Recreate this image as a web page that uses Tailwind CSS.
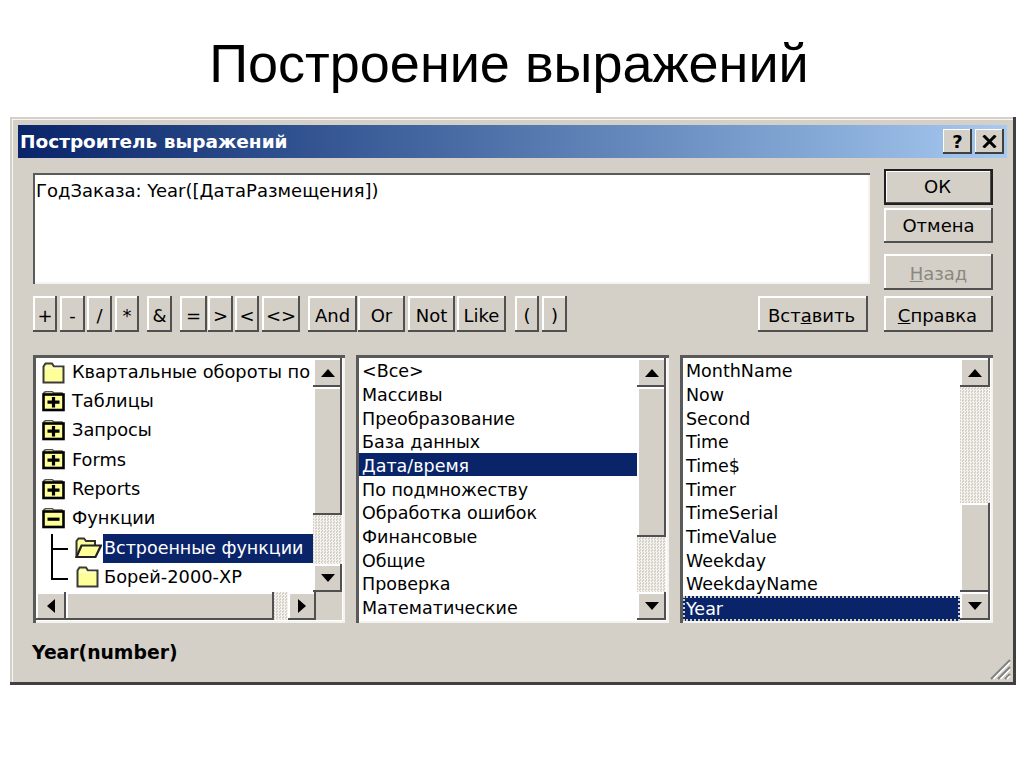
<!DOCTYPE html>
<html lang="ru">
<head>
<meta charset="UTF-8">
<title>Построение выражений</title>
<script src="https://cdn.jsdelivr.net/npm/@tailwindcss/browser@4"></script>
</head>
<body class="bg-white w-[1024px] h-[767px] overflow-hidden font-['DejaVu_Sans',sans-serif] text-[18px] text-black">
<svg class="hidden">
  <symbol id="folder" viewBox="0 0 23 22">
    <path d="M1.5 20.5V4.5L3.5 1.5H10L12 4.5H21.5V20.5Z" fill="#ffff99" stroke="#3a3a3a" stroke-width="2"/>
    <path d="M3 6H20" stroke="#fff" stroke-width="1"/>
  </symbol>
  <symbol id="folder-plus" viewBox="0 0 23 22">
    <path d="M2 5V1.5L4 0.5H10L12 2H20V5" fill="#e8e8a0" stroke="#555" stroke-width="1.5"/>
    <rect x="1.5" y="3.5" width="20" height="15.5" fill="#ffff99" stroke="#000" stroke-width="2.6"/>
    <path d="M5.5 11.2H17.5M11.5 6V16.5" stroke="#000" stroke-width="3.2"/>
  </symbol>
  <symbol id="folder-minus" viewBox="0 0 23 22">
    <path d="M2 5V1.5L4 0.5H10L12 2H20V5" fill="#e8e8a0" stroke="#555" stroke-width="1.5"/>
    <rect x="1.5" y="3.5" width="20" height="15.5" fill="#ffff99" stroke="#000" stroke-width="2.6"/>
    <path d="M5.5 11.2H17.5" stroke="#000" stroke-width="3.2"/>
  </symbol>
  <symbol id="folder-open" viewBox="0 0 27 22">
    <path d="M1.5 20V4L3.5 1.5H9L11 4H20V8" fill="#ffff99" stroke="#333" stroke-width="2"/>
    <path d="M1.5 20L6.5 8.5H26L20.5 20Z" fill="#ffff99" stroke="#222" stroke-width="2.2"/>
  </symbol>
  <symbol id="arrow-up" viewBox="0 0 14 8"><path d="M7 0L14 8H0Z" fill="#000"/></symbol>
  <symbol id="arrow-down" viewBox="0 0 14 8"><path d="M7 8L14 0H0Z" fill="#000"/></symbol>
  <symbol id="arrow-left" viewBox="0 0 8 14"><path d="M0 7L8 0V14Z" fill="#000"/></symbol>
  <symbol id="arrow-right" viewBox="0 0 8 14"><path d="M8 7L0 0V14Z" fill="#000"/></symbol>
</svg>

<!-- Slide heading -->
<h1 class="h-[117px] flex items-center justify-center pt-[9px] pr-[6px] font-['Liberation_Sans',sans-serif] text-[54px] text-black">Построение выражений</h1>

<!-- Dialog -->
<div class="relative ml-[10px] w-[1006px] h-[568px] bg-[#d4d0c8] pt-[8px] pl-[8px] pr-[9px] shadow-[inset_-3px_-3px_0_#404040,inset_2px_2px_0_#d4d0c8,inset_3px_3px_0_#f6f5f1]">
  <!-- Title bar -->
  <div class="h-[33px] flex items-center justify-between pl-[2px] pr-[3px] bg-gradient-to-r from-[#0a246a] to-[#a6caf0]">
    <span class="font-bold text-white text-[18.5px]">Построитель выражений</span>
    <div class="flex gap-[3px]">
      <div class="w-[29px] h-[25px] bg-[#d4d0c8] flex items-center justify-center font-bold text-[18px] shadow-[inset_-2px_-2px_0_#404040,inset_1px_1px_0_#fff]">?</div>
      <div class="w-[29px] h-[25px] bg-[#d4d0c8] flex items-center justify-center shadow-[inset_-2px_-2px_0_#404040,inset_1px_1px_0_#fff]">
        <svg class="w-[15px] h-[13px]" viewBox="0 0 15 13"><path d="M1.5 0.5L13.5 12.5M13.5 0.5L1.5 12.5" stroke="#000" stroke-width="3"/></svg>
      </div>
    </div>
  </div>

  <div class="pl-[15px] pr-[14px]">
    <!-- Expression + buttons -->
    <div class="flex justify-between">
      <div class="w-[837px] pt-[15px]">
        <div class="h-[111px] bg-white pl-[3px] pt-[4px] shadow-[inset_2px_2px_0_#5a5a5a,inset_-2px_-2px_0_#f4f3ef]">ГодЗаказа: Year([ДатаРазмещения])</div>
        <div class="mt-[12px] flex h-[36px]">
          <button class="w-[24px] ml-0 pt-[3px] bg-[#d4d0c8] shadow-[inset_-2px_-2px_0_#505050,inset_2px_2px_0_#fff]">+</button>
          <button class="w-[25px] ml-[3px] pt-[3px] bg-[#d4d0c8] shadow-[inset_-2px_-2px_0_#505050,inset_2px_2px_0_#fff]">-</button>
          <button class="w-[25px] ml-[2px] pt-[3px] bg-[#d4d0c8] shadow-[inset_-2px_-2px_0_#505050,inset_2px_2px_0_#fff]">/</button>
          <button class="w-[24px] ml-[3px] pt-[3px] bg-[#d4d0c8] shadow-[inset_-2px_-2px_0_#505050,inset_2px_2px_0_#fff]">*</button>
          <button class="w-[25px] ml-[8px] pt-[3px] bg-[#d4d0c8] shadow-[inset_-2px_-2px_0_#505050,inset_2px_2px_0_#fff]">&amp;</button>
          <button class="w-[27px] ml-[8px] pt-[3px] bg-[#d4d0c8] shadow-[inset_-2px_-2px_0_#505050,inset_2px_2px_0_#fff]">=</button>
          <button class="w-[25px] ml-[1px] pt-[3px] bg-[#d4d0c8] shadow-[inset_-2px_-2px_0_#505050,inset_2px_2px_0_#fff]">&gt;</button>
          <button class="w-[24px] ml-[2px] pt-[3px] bg-[#d4d0c8] shadow-[inset_-2px_-2px_0_#505050,inset_2px_2px_0_#fff]">&lt;</button>
          <button class="w-[38px] ml-[3px] pt-[3px] bg-[#d4d0c8] shadow-[inset_-2px_-2px_0_#505050,inset_2px_2px_0_#fff]">&lt;&gt;</button>
          <button class="w-[49px] ml-[8px] pt-[3px] bg-[#d4d0c8] shadow-[inset_-2px_-2px_0_#505050,inset_2px_2px_0_#fff]">And</button>
          <button class="w-[47px] ml-[1px] pt-[3px] bg-[#d4d0c8] shadow-[inset_-2px_-2px_0_#505050,inset_2px_2px_0_#fff]">Or</button>
          <button class="w-[47px] ml-[3px] pt-[3px] bg-[#d4d0c8] shadow-[inset_-2px_-2px_0_#505050,inset_2px_2px_0_#fff]">Not</button>
          <button class="w-[49px] ml-[2px] pt-[3px] bg-[#d4d0c8] shadow-[inset_-2px_-2px_0_#505050,inset_2px_2px_0_#fff]">Like</button>
          <button class="w-[24px] ml-[9px] pt-[3px] bg-[#d4d0c8] shadow-[inset_-2px_-2px_0_#505050,inset_2px_2px_0_#fff]">(</button>
          <button class="w-[25px] ml-[3px] pt-[3px] bg-[#d4d0c8] shadow-[inset_-2px_-2px_0_#505050,inset_2px_2px_0_#fff]">)</button>
          <button class="w-[110px] ml-[191px] pt-[3px] pr-[3px] bg-[#d4d0c8] shadow-[inset_-2px_-2px_0_#505050,inset_2px_2px_0_#fff]">Вст<u>а</u>вить</button>
        </div>
      </div>
      <div class="w-[109px] pt-[11px] flex flex-col">
        <button class="h-[36px] pb-[2px] pr-[2px] bg-[#d4d0c8] shadow-[inset_-2px_-2px_0_#202020,inset_2px_2px_0_#202020,inset_-3px_-3px_0_#505050,inset_3px_3px_0_#fff]">ОК</button>
        <button class="h-[35px] mt-[3px] pb-[1px] bg-[#d4d0c8] shadow-[inset_-2px_-2px_0_#505050,inset_2px_2px_0_#fff]">Отмена</button>
        <button class="h-[36px] mt-[11px] pt-[3px] bg-[#d4d0c8] text-[#8a8880] shadow-[inset_-2px_-2px_0_#505050,inset_2px_2px_0_#fff]"><u>Н</u>азад</button>
        <button class="h-[36px] mt-[6px] pt-[3px] pr-[2px] bg-[#d4d0c8] shadow-[inset_-2px_-2px_0_#505050,inset_2px_2px_0_#fff]"><u>С</u>правка</button>
      </div>
    </div>

    <!-- Lists -->
    <div class="mt-[23px] flex gap-[11px] h-[268px]">
      <!-- Tree -->
      <div class="w-[312px] p-[3px] bg-white shadow-[inset_3px_3px_0_#5a5a5a,inset_-2px_-2px_0_#f4f3ef] flex flex-col text-[17.8px]">
        <div class="flex h-[234px]">
          <div class="w-[279px]">
            <div class="h-[29.25px] flex items-center pl-[6px] gap-[7px]"><svg class="w-[23px] h-[22px]"><use href="#folder"/></svg>Квартальные обороты по</div>
            <div class="h-[29.25px] flex items-center pl-[6px] gap-[7px]"><svg class="w-[23px] h-[22px]"><use href="#folder-plus"/></svg><span class="pb-[2px]">Таблицы</span></div>
            <div class="h-[29.25px] flex items-center pl-[6px] gap-[7px]"><svg class="w-[23px] h-[22px]"><use href="#folder-plus"/></svg><span class="pb-[2px]">Запросы</span></div>
            <div class="h-[29.25px] flex items-center pl-[6px] gap-[7px]"><svg class="w-[23px] h-[22px]"><use href="#folder-plus"/></svg>Forms</div>
            <div class="h-[29.25px] flex items-center pl-[6px] gap-[7px]"><svg class="w-[23px] h-[22px]"><use href="#folder-plus"/></svg>Reports</div>
            <div class="h-[29.25px] flex items-center pl-[6px] gap-[7px]"><svg class="w-[23px] h-[22px]"><use href="#folder-minus"/></svg><span class="pb-[2px]">Функции</span></div>
            <div class="relative h-[29.25px] flex items-center pl-[39px]">
              <span class="absolute left-[15px] top-0 h-full border-l-2 border-black"></span>
              <span class="absolute left-[15px] top-[14px] w-[17px] border-t-2 border-black"></span>
              <svg class="w-[27px] h-[22px] shrink-0"><use href="#folder-open"/></svg>
              <span class="ml-[1px] pl-[1px] flex-1 h-full flex items-center bg-[#0a246a] text-white text-[17.5px]">Встроенные функции</span>
            </div>
            <div class="relative h-[29.25px] flex items-center pl-[39px]">
              <span class="absolute left-[15px] top-0 h-[17px] border-l-2 border-black"></span>
              <span class="absolute left-[15px] top-[15px] w-[17px] border-t-2 border-black"></span>
              <svg class="w-[25px] h-[22px] shrink-0"><use href="#folder"/></svg>
              <span class="ml-[4px]">Борей-2000-XP</span>
            </div>
          </div>
          <div class="w-[29px] flex flex-col">
            <div class="h-[29px] bg-[#d4d0c8] flex items-center justify-center shadow-[inset_-2px_-2px_0_#505050,inset_2px_2px_0_#fff]"><svg class="w-[14px] h-[8px]"><use href="#arrow-up"/></svg></div>
            <div class="h-[128px] bg-[#d4d0c8] shadow-[inset_-2px_-2px_0_#505050,inset_2px_2px_0_#fff]"></div>
            <div class="h-[49px] bg-[repeating-conic-gradient(#f4f3ef_0_25%,#d4d0c8_0_50%)] bg-[length:3px_3px]"></div>
            <div class="h-[28px] bg-[#d4d0c8] flex items-center justify-center shadow-[inset_-2px_-2px_0_#505050,inset_2px_2px_0_#fff]"><svg class="w-[14px] h-[8px]"><use href="#arrow-down"/></svg></div>
          </div>
        </div>
        <div class="flex h-[28px] bg-[#d4d0c8]">
          <div class="w-[30px] flex items-center justify-center bg-[#d4d0c8] shadow-[inset_-2px_-2px_0_#505050,inset_2px_2px_0_#fff]"><svg class="w-[8px] h-[14px]"><use href="#arrow-left"/></svg></div>
          <div class="w-[208px] bg-[#d4d0c8] shadow-[inset_-2px_-2px_0_#505050,inset_2px_2px_0_#fff]"></div>
          <div class="w-[14px] bg-[repeating-conic-gradient(#f4f3ef_0_25%,#d4d0c8_0_50%)] bg-[length:3px_3px]"></div>
          <div class="w-[28px] flex items-center justify-center bg-[#d4d0c8] shadow-[inset_-2px_-2px_0_#505050,inset_2px_2px_0_#fff]"><svg class="w-[8px] h-[14px]"><use href="#arrow-right"/></svg></div>
        </div>
      </div>

      <!-- Categories -->
      <div class="w-[313px] p-[3px] bg-white shadow-[inset_3px_3px_0_#5a5a5a,inset_-2px_-2px_0_#f4f3ef] flex text-[17.5px]">
        <div class="w-[281px]">
          <div class="h-[23.7px] flex items-center pl-[3px] pt-[3px]">&lt;Все&gt;</div>
          <div class="h-[23.7px] flex items-center pl-[3px] pt-[3px]">Массивы</div>
          <div class="h-[23.7px] flex items-center pl-[3px] pt-[3px]">Преобразование</div>
          <div class="h-[23.7px] flex items-center pl-[3px] pt-[3px]">База данных</div>
          <div class="h-[23.7px] flex items-center pl-[3px] pt-[3px] bg-[#0a246a] text-white">Дата/время</div>
          <div class="h-[23.7px] flex items-center pl-[3px] pt-[3px]">По подмножеству</div>
          <div class="h-[23.7px] flex items-center pl-[3px] pt-[3px]">Обработка ошибок</div>
          <div class="h-[23.7px] flex items-center pl-[3px] pt-[3px]">Финансовые</div>
          <div class="h-[23.7px] flex items-center pl-[3px] pt-[3px]">Общие</div>
          <div class="h-[23.7px] flex items-center pl-[3px] pt-[3px]">Проверка</div>
          <div class="h-[23.7px] flex items-center pl-[3px] pt-[3px]">Математические</div>
        </div>
        <div class="w-[29px] flex flex-col">
          <div class="h-[29px] bg-[#d4d0c8] flex items-center justify-center shadow-[inset_-2px_-2px_0_#505050,inset_2px_2px_0_#fff]"><svg class="w-[14px] h-[8px]"><use href="#arrow-up"/></svg></div>
          <div class="h-[150px] bg-[#d4d0c8] shadow-[inset_-2px_-2px_0_#505050,inset_2px_2px_0_#fff]"></div>
          <div class="h-[55px] bg-[repeating-conic-gradient(#f4f3ef_0_25%,#d4d0c8_0_50%)] bg-[length:3px_3px]"></div>
          <div class="h-[28px] bg-[#d4d0c8] flex items-center justify-center shadow-[inset_-2px_-2px_0_#505050,inset_2px_2px_0_#fff]"><svg class="w-[14px] h-[8px]"><use href="#arrow-down"/></svg></div>
        </div>
      </div>

      <!-- Functions -->
      <div class="w-[313px] p-[3px] bg-white shadow-[inset_3px_3px_0_#5a5a5a,inset_-2px_-2px_0_#f4f3ef] flex text-[17.5px]">
        <div class="w-[280px]">
          <div class="h-[23.7px] flex items-center pl-[3px] pt-[3px]">MonthName</div>
          <div class="h-[23.7px] flex items-center pl-[3px] pt-[3px]">Now</div>
          <div class="h-[23.7px] flex items-center pl-[3px] pt-[3px]">Second</div>
          <div class="h-[23.7px] flex items-center pl-[3px] pt-[3px]">Time</div>
          <div class="h-[23.7px] flex items-center pl-[3px] pt-[3px]">Time$</div>
          <div class="h-[23.7px] flex items-center pl-[3px] pt-[3px]">Timer</div>
          <div class="h-[23.7px] flex items-center pl-[3px] pt-[3px]">TimeSerial</div>
          <div class="h-[23.7px] flex items-center pl-[3px] pt-[3px]">TimeValue</div>
          <div class="h-[23.7px] flex items-center pl-[3px] pt-[3px]">Weekday</div>
          <div class="h-[23.7px] flex items-center pl-[3px] pt-[3px]">WeekdayName</div>
          <div class="h-[25px] mt-[1.5px] flex items-center pl-[1px] bg-[#0a246a] text-white border-2 border-dotted border-[#d0d0c0]">Year</div>
        </div>
        <div class="w-[30px] flex flex-col">
          <div class="h-[29px] bg-[#d4d0c8] flex items-center justify-center shadow-[inset_-2px_-2px_0_#505050,inset_2px_2px_0_#fff]"><svg class="w-[14px] h-[8px]"><use href="#arrow-up"/></svg></div>
          <div class="h-[116px] bg-[repeating-conic-gradient(#f4f3ef_0_25%,#d4d0c8_0_50%)] bg-[length:3px_3px]"></div>
          <div class="h-[89px] bg-[#d4d0c8] shadow-[inset_-2px_-2px_0_#505050,inset_2px_2px_0_#fff]"></div>
          <div class="h-[28px] bg-[#d4d0c8] flex items-center justify-center shadow-[inset_-2px_-2px_0_#505050,inset_2px_2px_0_#fff]"><svg class="w-[14px] h-[8px]"><use href="#arrow-down"/></svg></div>
        </div>
      </div>
    </div>

    <div class="mt-[19px] -ml-[1px] font-bold text-[18.8px] leading-[22px]">Year(number)</div>
  </div>

  <!-- Resize grip -->
  <svg class="absolute right-[5px] bottom-[5px] w-[22px] h-[22px]" viewBox="0 0 22 22">
    <path d="M2 21L21 2M9 21L21 9M16 21L21 16" stroke="#808080" stroke-width="2"/>
    <path d="M4.5 21L21 4.5M11.5 21L21 11.5M18 21L21 18" stroke="#fff" stroke-width="1.5"/>
  </svg>
</div>
</body>
</html>
